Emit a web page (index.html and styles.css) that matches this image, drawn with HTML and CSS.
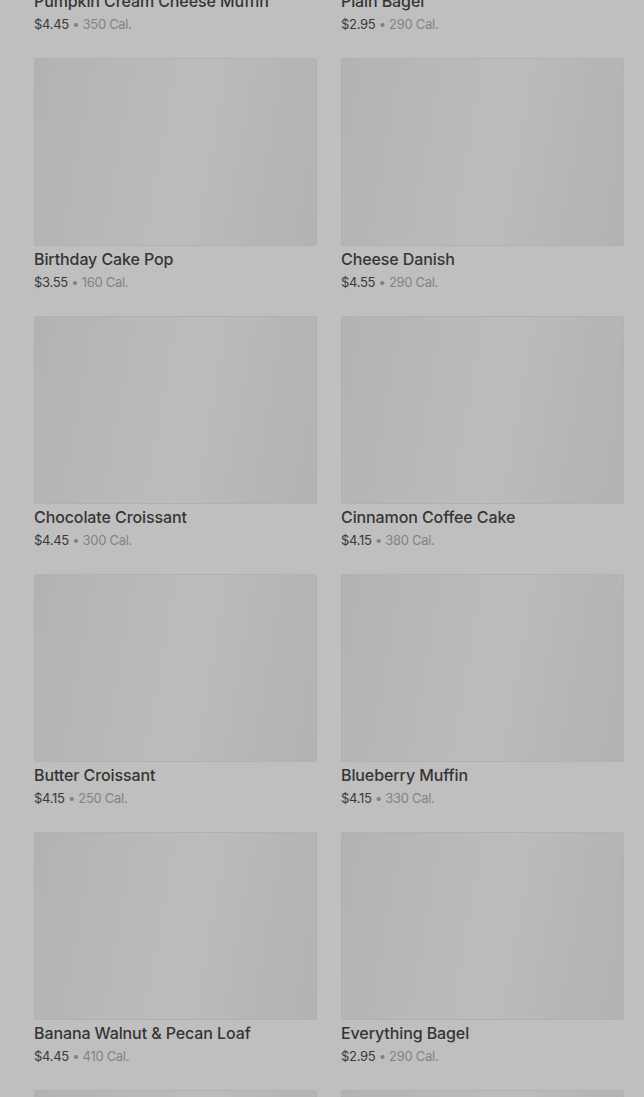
FILE: index.html
```html
<!DOCTYPE html>
<html lang="en">
<head>
    <meta charset="UTF-8">
    <meta name="viewport" content="width=device-width, initial-scale=1.0">
    <title>Menu</title>
    <link rel="stylesheet" href="styles.css">
</head>
<body>

<div class="menu">
    <div class="item">
        <div class="thumb"></div>
        <p class="name">Pumpkin Cream Cheese Muffin</p>
        <p class="info"><span class="price">$4.45</span> • 350 Cal.</p>
    </div>
    <div class="item">
        <div class="thumb"></div>
        <p class="name">Plain Bagel</p>
        <p class="info"><span class="price">$2.95</span> • 290 Cal.</p>
    </div>

    <div class="item">
        <div class="thumb"></div>
        <p class="name">Birthday Cake Pop</p>
        <p class="info"><span class="price">$3.55</span> • 160 Cal.</p>
    </div>
    <div class="item">
        <div class="thumb"></div>
        <p class="name">Cheese Danish</p>
        <p class="info"><span class="price">$4.55</span> • 290 Cal.</p>
    </div>

    <div class="item">
        <div class="thumb"></div>
        <p class="name">Chocolate Croissant</p>
        <p class="info"><span class="price">$4.45</span> • 300 Cal.</p>
    </div>
    <div class="item">
        <div class="thumb"></div>
        <p class="name">Cinnamon Coffee Cake</p>
        <p class="info"><span class="price">$4.15</span> • 380 Cal.</p>
    </div>

    <div class="item">
        <div class="thumb"></div>
        <p class="name">Butter Croissant</p>
        <p class="info"><span class="price">$4.15</span> • 250 Cal.</p>
    </div>
    <div class="item">
        <div class="thumb"></div>
        <p class="name">Blueberry Muffin</p>
        <p class="info"><span class="price">$4.15</span> • 330 Cal.</p>
    </div>

    <div class="item">
        <div class="thumb"></div>
        <p class="name">Banana Walnut &amp; Pecan Loaf</p>
        <p class="info"><span class="price">$4.45</span> • 410 Cal.</p>
    </div>
    <div class="item">
        <div class="thumb"></div>
        <p class="name">Everything Bagel</p>
        <p class="info"><span class="price">$2.95</span> • 290 Cal.</p>
    </div>

    <div class="item">
        <div class="thumb"></div>
    </div>
    <div class="item">
        <div class="thumb"></div>
    </div>
</div>

</body>
</html>
```

FILE: styles.css
```css
body {
    font-family: Inter, "Noto Sans", sans-serif;
    background-color: #bfbfbf;
    margin: 0;
    padding: 0;
    overflow: hidden;
}

/* la lista arranca desplazada, como en la captura */
.menu {
    display: grid;
    grid-template-columns: 283px 283px;
    column-gap: 24px;
    row-gap: 24px;
    padding: 0 20px 0 34px;
    margin-top: -200px;
}

.item {
    display: flex;
    flex-direction: column;
}

.thumb {
    height: 186px;
    border: 1px solid #b1b1b1;
    border-radius: 2px;
    background: linear-gradient(100deg, #b3b3b3 0%, #b8b8b8 30%, #bcbcbc 55%, #b6b6b6 80%, #b3b3b3 100%);
}

.name {
    margin: 3px 0 0;
    font-size: 16px;
    line-height: 20px;
    font-weight: 500;
    letter-spacing: -0.1px;
    color: #353535;
}

.info {
    margin: 3px 0 0;
    font-size: 13px;
    line-height: 20px;
    letter-spacing: -0.3px;
    color: #838383;
}

.price {
    color: #3a3a3a;
}
```
